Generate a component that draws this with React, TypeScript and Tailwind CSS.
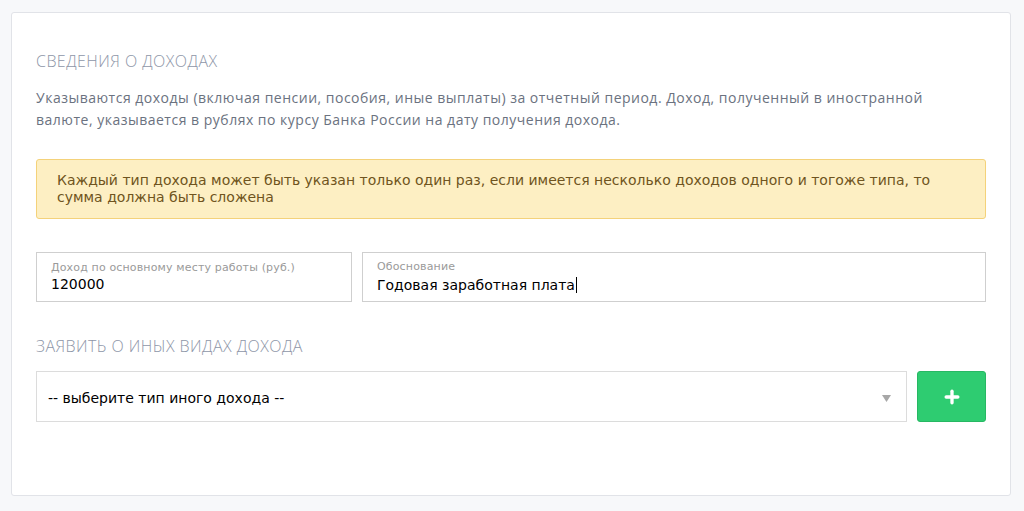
import { Plus } from 'lucide-react';

const heading = "font-['Open_Sans',sans-serif] font-light text-[16px] tracking-[0.45px] uppercase text-[#8e96a8] leading-[22px]";
const dv = "font-['DejaVu_Sans',sans-serif]";

function Field({ label, value, caret }: { label: string; value: string; caret?: boolean }) {
  return (
    <div className="flex h-[50px] flex-col justify-center border border-[#cfcfcf] bg-white px-[14px]">
      <span className={`${dv} text-[11px] leading-[14px] tracking-[0.15px] text-[#9a9a9a]`}>{label}</span>
      <span className={`${dv} text-[14px] leading-[19px] text-black`}>
        {value}
        {caret && <span className="ml-[1px] inline-block h-[16px] w-[1px] translate-y-[3px] bg-black" />}
      </span>
    </div>
  );
}

export default function App() {
  return (
    <div className="min-h-[511px] w-full bg-[#f7f8fa] px-[11px] pt-[12px] pb-[15px]">
      <div className="w-[1000px] rounded-[3px] border border-[#e1e3e8] bg-white px-[24px] pt-[37px] pb-[73px]">
        <h2 className={heading}>Сведения о доходах</h2>
        <p className="mt-[15px] max-w-[935px] font-['Open_Sans',sans-serif] text-[14px] leading-[22px] tracking-[0.5px] text-[#6b7280]">
          Указываются доходы (включая пенсии, пособия, иные выплаты) за отчетный период. Доход, полученный в иностранной валюте, указывается в рублях по курсу Банка России на дату получения дохода.
        </p>

        <div className={`${dv} mt-[28px] rounded-[3px] border border-[#f4d27a] bg-[#fdefc3] px-[20px] pt-[12px] pb-[12px] text-[14px] leading-[17px] text-[#6f5420]`}>
          Каждый тип дохода может быть указан только один раз, если имеется несколько доходов одного и тогоже типа, то сумма должна быть сложена
        </div>

        <div className="mt-[33px] grid grid-cols-[316px_1fr] gap-[10px]">
          <Field label="Доход по основному месту работы (руб.)" value="120000" />
          <Field label="Обоснование" value="Годовая заработная плата" caret />
        </div>

        <h2 className={`${heading} mt-[33px]`}>Заявить о иных видах дохода</h2>

        <div className="mt-[14px] flex gap-[10px]">
          <div className="flex h-[51px] flex-1 items-center justify-between border border-[#dcdcdc] bg-white pr-[15px] pl-[11px]">
            <span className={`${dv} mt-[4px] text-[14px] text-black`}>-- выберите тип иного дохода --</span>
            <svg width="9" height="7" viewBox="0 0 9 7" className="mt-[4px]">
              <path d="M0 0h9L4.5 7z" fill="#a7a7a7" />
            </svg>
          </div>
          <button className="flex h-[51px] w-[69px] items-center justify-center rounded-[3px] border border-[#27b863] bg-[#2ecc71]">
            <Plus size={20} strokeWidth={4} className="text-white" />
          </button>
        </div>
      </div>
    </div>
  );
}
